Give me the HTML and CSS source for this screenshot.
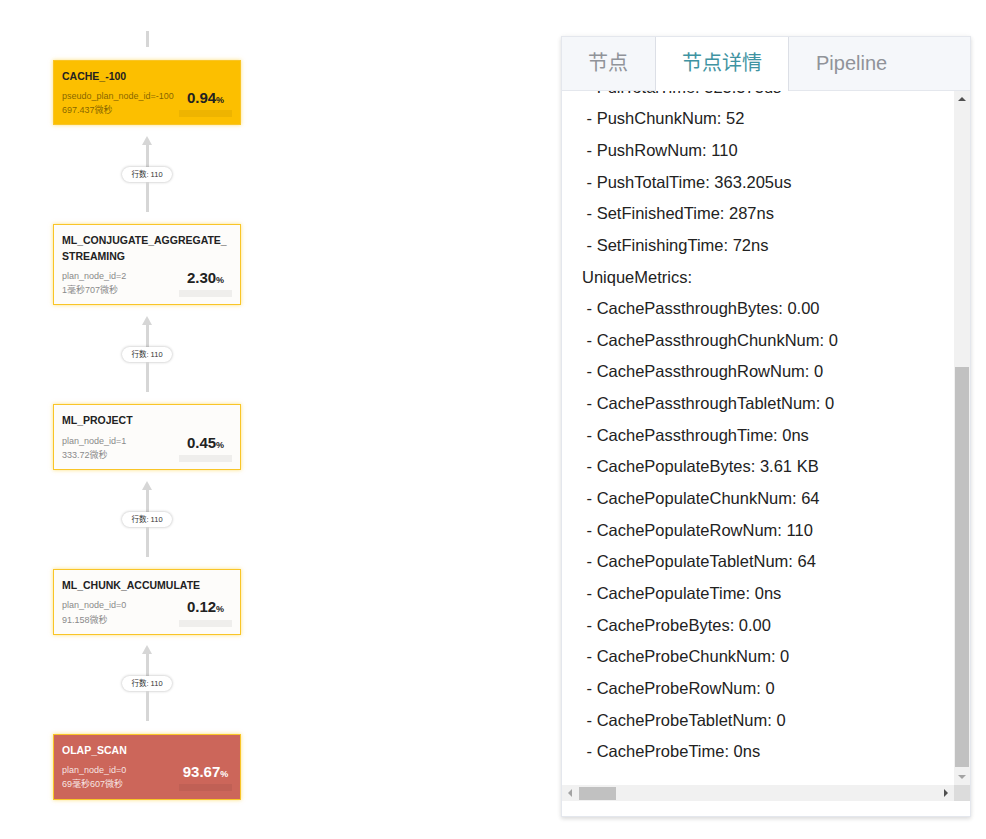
FILE: index.html
```html
<!DOCTYPE html>
<html lang="zh">
<head>
<meta charset="utf-8">
<title>Profile</title>
<link rel="stylesheet" href="styles.css">
</head>
<body>
<div class="page">
  <div class="graph">
    <div class="stub"></div>

    <div class="node node-hot">
      <div class="node-title">CACHE_-100</div>
      <div class="node-body">
        <div class="node-meta"><div>pseudo_plan_node_id=-100</div><div>697.437微秒</div></div>
        <div class="node-stat"><div class="pct">0.94<small>%</small></div><div class="bar"></div></div>
      </div>
    </div>
    <div class="edge"><div class="arrow"></div><div class="line line-a"></div><div class="pill">行数: 110</div><div class="line line-b"></div></div>

    <div class="node">
      <div class="node-title">ML_CONJUGATE_AGGREGATE_STREAMING</div>
      <div class="node-body">
        <div class="node-meta"><div>plan_node_id=2</div><div>1毫秒707微秒</div></div>
        <div class="node-stat"><div class="pct">2.30<small>%</small></div><div class="bar"></div></div>
      </div>
    </div>
    <div class="edge"><div class="arrow"></div><div class="line line-a"></div><div class="pill">行数: 110</div><div class="line line-b"></div></div>

    <div class="node">
      <div class="node-title">ML_PROJECT</div>
      <div class="node-body">
        <div class="node-meta"><div>plan_node_id=1</div><div>333.72微秒</div></div>
        <div class="node-stat"><div class="pct">0.45<small>%</small></div><div class="bar"></div></div>
      </div>
    </div>
    <div class="edge"><div class="arrow"></div><div class="line line-a"></div><div class="pill">行数: 110</div><div class="line line-b"></div></div>

    <div class="node">
      <div class="node-title">ML_CHUNK_ACCUMULATE</div>
      <div class="node-body">
        <div class="node-meta"><div>plan_node_id=0</div><div>91.158微秒</div></div>
        <div class="node-stat"><div class="pct">0.12<small>%</small></div><div class="bar"></div></div>
      </div>
    </div>
    <div class="edge"><div class="arrow"></div><div class="line line-a"></div><div class="pill">行数: 110</div><div class="line line-b"></div></div>

    <div class="node node-red">
      <div class="node-title">OLAP_SCAN</div>
      <div class="node-body">
        <div class="node-meta"><div>plan_node_id=0</div><div>69毫秒607微秒</div></div>
        <div class="node-stat"><div class="pct">93.67<small>%</small></div><div class="bar"></div></div>
      </div>
    </div>
  </div>

  <div class="panel">
    <div class="tabs">
      <div class="tab">节点</div>
      <div class="tab active">节点详情</div>
      <div class="tab">Pipeline</div>
    </div>
    <div class="tab-body">
      <div class="scroll-frame">
        <div class="scroller">
          <div class="detail-text">
            <div class="ln"> - PullTotalTime: 323.373us</div>
            <div class="ln"> - PushChunkNum: 52</div>
            <div class="ln"> - PushRowNum: 110</div>
            <div class="ln"> - PushTotalTime: 363.205us</div>
            <div class="ln"> - SetFinishedTime: 287ns</div>
            <div class="ln"> - SetFinishingTime: 72ns</div>
            <div class="ln">UniqueMetrics:</div>
            <div class="ln"> - CachePassthroughBytes: 0.00</div>
            <div class="ln"> - CachePassthroughChunkNum: 0</div>
            <div class="ln"> - CachePassthroughRowNum: 0</div>
            <div class="ln"> - CachePassthroughTabletNum: 0</div>
            <div class="ln"> - CachePassthroughTime: 0ns</div>
            <div class="ln"> - CachePopulateBytes: 3.61 KB</div>
            <div class="ln"> - CachePopulateChunkNum: 64</div>
            <div class="ln"> - CachePopulateRowNum: 110</div>
            <div class="ln"> - CachePopulateTabletNum: 64</div>
            <div class="ln"> - CachePopulateTime: 0ns</div>
            <div class="ln"> - CacheProbeBytes: 0.00</div>
            <div class="ln"> - CacheProbeChunkNum: 0</div>
            <div class="ln"> - CacheProbeRowNum: 0</div>
            <div class="ln"> - CacheProbeTabletNum: 0</div>
            <div class="ln"> - CacheProbeTime: 0ns</div>
          </div>
        </div>
        <div class="vbar">
          <div class="sb-btn"><span class="tri tri-up"></span></div>
          <div class="vtrack"><div class="vthumb"></div></div>
          <div class="sb-btn"><span class="tri tri-down"></span></div>
        </div>
        <div class="hbar">
          <div class="sb-btn"><span class="tri tri-left"></span></div>
          <div class="htrack"><div class="hthumb"></div></div>
          <div class="sb-btn"><span class="tri tri-right"></span></div>
        </div>
        <div class="sb-corner"></div>
      </div>
    </div>
  </div>
</div>
</body>
</html>
```

FILE: styles.css
```css
* { box-sizing: border-box; }
html, body { margin: 0; padding: 0; background: #fff; }
body {
  font-family: "Liberation Sans", Arial, "Noto Sans CJK SC", sans-serif;
  width: 986px;
  height: 839px;
  overflow: hidden;
}
.page { display: flex; align-items: flex-start; }

/* graph */
.graph {
  width: 188px;
  margin-left: 53px;
  padding-top: 31px;
  display: flex;
  flex-direction: column;
  align-items: center;
}
.stub { width: 3px; height: 16px; background: #d6d6d6; margin-bottom: 12.5px; }
.node {
  width: 188px;
  border: 1px solid #f9c527;
  background: #fdfcfa;
  box-shadow: 0 0 4px rgba(250, 196, 20, .55);
  padding: 8px 8px 7px;
  color: #222;
}
.node-title {
  font-size: 10.5px;
  font-weight: bold;
  line-height: 15.6px;
  word-break: break-all;
  margin-bottom: 4.5px;
}
.node-body { display: flex; justify-content: space-between; align-items: flex-start; }
.node-meta { font-size: 9px; line-height: 14.3px; color: #8a8a8a; white-space: nowrap; }
.node-stat { width: 53px; display: flex; flex-direction: column; align-items: center; }
.pct { font-size: 15px; font-weight: bold; line-height: 18px; white-space: nowrap; }
.pct small { font-size: 9px; }
.bar { width: 100%; height: 7px; background: rgba(0, 0, 0, .055); margin-top: 1.5px; }
.node-hot { background: #fcbf00; }
.node-hot .node-meta { color: rgba(0, 0, 0, .5); }
.node-red { background: #cc665a; color: #fff; }
.node-red .node-meta { color: rgba(255, 255, 255, .85); }

.edge {
  display: flex;
  flex-direction: column;
  align-items: center;
  padding: 10.5px 0 12.5px;
}
.arrow {
  width: 0; height: 0;
  border-left: 5px solid transparent;
  border-right: 5px solid transparent;
  border-bottom: 9px solid #d6d6d6;
}
.line { width: 3px; background: #d6d6d6; }
.line-a { height: 22px; }
.line-b { height: 30px; }
.pill {
  height: 15px;
  line-height: 15px;
  padding: 0 9px;
  border-radius: 8px;
  background: #fff;
  box-shadow: 0 0 3px rgba(0, 0, 0, .3);
  font-size: 7.5px;
  color: #333;
  white-space: nowrap;
}

/* panel */
.panel {
  width: 410px;
  height: 781px;
  margin-top: 36px;
  margin-left: 320px;
  border: 1px solid #e4e7ed;
  background: #fff;
  box-shadow: 0 2px 4px rgba(0, 0, 0, .12), 0 0 6px rgba(0, 0, 0, .04);
  display: flex;
  flex-direction: column;
}
.tabs {
  display: flex;
  flex: none;
  height: 54px;
  background: #f5f7fa;
  border-bottom: 1px solid #e4e7ed;
}
.tab {
  height: 53px;
  line-height: 53px;
  padding: 0 26px;
  font-size: 20px;
  color: #909399;
  white-space: nowrap;
}
.tab:first-child { padding-right: 27px; }
.tab:last-child { padding-left: 27px; }
.tab.active {
  height: 54px;
  margin-bottom: -1px;
  background: #fff;
  color: #3f93a2;
  border-left: 1px solid #dcdfe6;
  border-right: 1px solid #dcdfe6;
}
.tab-body { flex: 1; min-height: 0; padding-bottom: 15px; }

.scroll-frame {
  height: 710px;
  display: grid;
  grid-template-columns: 1fr 16px;
  grid-template-rows: 1fr 16px;
}
.scroller {
  overflow: hidden;
  display: flex;
  flex-direction: column;
  justify-content: flex-end;
}
.detail-text {
  flex: none;
  padding: 0 0 17px 20px;
  font-size: 16.5px;
  line-height: 31.65px;
  color: #222;
}
.ln { white-space: pre; }

/* scrollbars */
.vbar { display: flex; flex-direction: column; background: #f1f1f1; }
.hbar { display: flex; background: #f1f1f1; }
.sb-btn {
  flex: none;
  width: 16px;
  height: 16px;
  display: flex;
  align-items: center;
  justify-content: center;
}
.vtrack { flex: 1; display: flex; flex-direction: column; justify-content: flex-end; }
.vthumb { height: 400px; margin: 0 1px 2px; background: #c1c1c1; }
.htrack { flex: 1; display: flex; }
.hthumb { width: 37px; margin: 2px 0 1px 1px; background: #c1c1c1; }
.sb-corner { background: #dcdcdc; }
.tri { width: 0; height: 0; }
.tri-up { border-left: 4px solid transparent; border-right: 4px solid transparent; border-bottom: 4px solid #505050; }
.tri-down { border-left: 4px solid transparent; border-right: 4px solid transparent; border-top: 4px solid #a3a3a3; }
.tri-left { border-top: 4px solid transparent; border-bottom: 4px solid transparent; border-right: 4px solid #a3a3a3; }
.tri-right { border-top: 4px solid transparent; border-bottom: 4px solid transparent; border-left: 4px solid #505050; }
```
